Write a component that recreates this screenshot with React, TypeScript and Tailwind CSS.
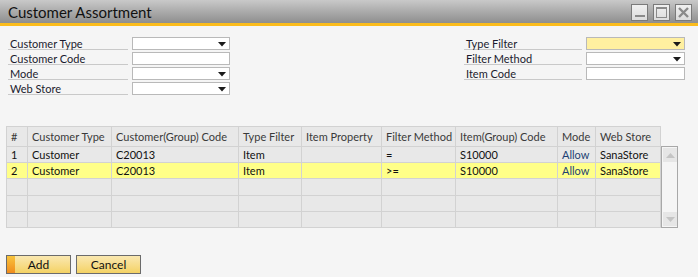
import { ReactNode } from 'react'

const font = { fontFamily: 'Lato, "Liberation Sans", sans-serif' }

function Arrow() {
  return (
    <svg width="8" height="5" viewBox="0 0 8 5" className="absolute right-[3px] top-[4px]">
      <path d="M0 0 H8 L4 4.5 Z" fill="#1a1a1a" />
    </svg>
  )
}

function Field({ label, combo, yellow, labelW = 120, inputW = 98 }: { label: string; combo?: boolean; yellow?: boolean; labelW?: number; inputW?: number }) {
  return (
    <div className="flex h-[15px] items-start">
      <div
        className="h-[14px] border-b border-[#c9c9c9] pl-[2px] pt-[2px] text-[11px] leading-[12px] text-[#1b1b2e]"
        style={{ width: labelW }}
      >
        {label}
      </div>
      <div
        className={`relative ml-[4px] mt-[1px] h-[13px] border border-[#b9b9b9] ${yellow ? 'bg-[#fff0a0]' : 'bg-white'}`}
        style={{ width: inputW }}
      >
        {combo && <Arrow />}
      </div>
    </div>
  )
}

const cols = [
  { name: '#', w: 21 },
  { name: 'Customer Type', w: 84 },
  { name: 'Customer(Group) Code', w: 127 },
  { name: 'Type Filter', w: 63 },
  { name: 'Item Property', w: 80 },
  { name: 'Filter Method', w: 74 },
  { name: 'Item(Group) Code', w: 102 },
  { name: 'Mode', w: 38 },
  { name: 'Web Store', w: 65 },
]

const rows: string[][] = [
  ['1', 'Customer', 'C20013', 'Item', '', '=', 'S10000', 'Allow', 'SanaStore'],
  ['2', 'Customer', 'C20013', 'Item', '', '>=', 'S10000', 'Allow', 'SanaStore'],
  ['', '', '', '', '', '', '', '', ''],
  ['', '', '', '', '', '', '', '', ''],
  ['', '', '', '', '', '', '', '', ''],
]

function TitleButton({ children }: { children: ReactNode }) {
  return (
    <div className="flex h-[17px] w-[17px] items-center justify-center border border-[#7a7a7a] bg-gradient-to-b from-[#f0f0f0] to-[#dcdcdc]">
      {children}
    </div>
  )
}

function ScrollArrow({ up }: { up?: boolean }) {
  return (
    <div className="flex h-[14px] w-[14px] items-center justify-center bg-[#e6e6e6]">
      <svg width="9" height="5" viewBox="0 0 9 5">
        <path d={up ? 'M0 5 H9 L4.5 0 Z' : 'M0 0 H9 L4.5 5 Z'} fill="#c4c4c4" />
      </svg>
    </div>
  )
}

export default function App() {
  return (
    <div className="flex h-[277px] w-[698px] flex-col overflow-hidden bg-[#f5f5f5]" style={font}>
      {/* Title bar */}
      <div className="flex h-[23px] items-center justify-between bg-gradient-to-b from-[#c9c9c9] to-[#8e8e8e] pl-[8px] pr-[6px]">
        <span className="whitespace-nowrap pt-[1px] text-[15px] leading-[20px] text-[#111]">Customer Assortment</span>
        <div className="flex gap-[5px] pt-[1px]">
          <TitleButton>
            <div className="mt-[8px] h-[2px] w-[10px] bg-[#8a8a8a]" />
          </TitleButton>
          <TitleButton>
            <div className="h-[11px] w-[11px] border border-[#8a8a8a] border-t-2" />
          </TitleButton>
          <TitleButton>
            <svg width="11" height="11" viewBox="0 0 11 11">
              <path d="M1 1 L10 10 M10 1 L1 10" stroke="#8a8a8a" strokeWidth="2.4" />
            </svg>
          </TitleButton>
        </div>
      </div>
      <div className="h-[3px] bg-[#fbbc1c]" />

      {/* Form */}
      <div className="flex justify-between pl-[8px] pr-[13px] pt-[10px]">
        <div className="flex flex-col">
          <Field label="Customer Type" combo />
          <Field label="Customer Code" />
          <Field label="Mode" combo />
          <Field label="Web Store" combo />
        </div>
        <div className="flex flex-col">
          <Field label="Type Filter" combo yellow labelW={118} inputW={99} />
          <Field label="Filter Method" combo labelW={118} inputW={99} />
          <Field label="Item Code" labelW={118} inputW={99} />
        </div>
      </div>

      {/* Grid */}
      <div className="mt-[30px] flex pl-[6px]">
        <table className="border-collapse text-[11px] leading-[13px]" style={{ tableLayout: 'fixed', width: 654 }}>
          <colgroup>
            {cols.map((c) => (
              <col key={c.name} style={{ width: c.w }} />
            ))}
          </colgroup>
          <thead>
            <tr className="h-[20px] bg-[#e8e8e8]">
              {cols.map((c) => (
                <th
                  key={c.name}
                  className="overflow-hidden whitespace-nowrap border border-[#d2d2d2] pl-[4px] text-left font-normal text-[#3a3a3a]"
                >
                  {c.name}
                </th>
              ))}
            </tr>
          </thead>
          <tbody>
            {rows.map((r, i) => (
              <tr key={i} className={`h-[16px] ${i === 1 ? 'bg-[#ffff88]' : 'bg-[#e8e8e8]'}`}>
                {r.map((v, j) => (
                  <td
                    key={j}
                    className={`whitespace-nowrap border border-[#d2d2d2] pl-[4px] ${j === 7 ? 'text-[#1d3f73]' : 'text-[#111]'}`}
                  >
                    {v}
                  </td>
                ))}
              </tr>
            ))}
          </tbody>
        </table>
        <div className="mt-[20px] flex h-[82px] w-[17px] flex-col justify-between border border-[#a8a8a8] bg-[#f5f5f5] p-[1px]">
          <ScrollArrow up />
          <ScrollArrow />
        </div>
      </div>

      {/* Buttons */}
      <div className="mt-[27px] flex gap-[5px] pl-[6px]">
        <button className="relative h-[19px] w-[65px] overflow-hidden border border-[#6b6b6b] bg-gradient-to-b from-[#fae8b0] to-[#f4d262] text-[12px] leading-[15px] text-[#111]">
          <span className="absolute left-0 top-0 h-full w-[8px] bg-gradient-to-b from-[#f8c43c] to-[#f08c1c]" />
          Add
        </button>
        <button className="h-[19px] w-[65px] border border-[#6b6b6b] bg-gradient-to-b from-[#fae8b0] to-[#f4d262] text-[12px] leading-[15px] text-[#111]">
          Cancel
        </button>
      </div>
    </div>
  )
}
